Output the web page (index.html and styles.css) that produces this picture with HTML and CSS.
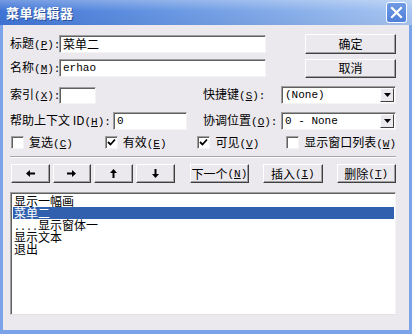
FILE: index.html
```html
<!DOCTYPE html>
<html>
<head>
<meta charset="utf-8">
<link rel="stylesheet" href="styles.css">
</head>
<body>
<div class="window">
  <div class="titlebar">
    <span class="title">菜单编辑器</span>
    <span class="close"><svg width="13" height="13" viewBox="0 0 13 13"><path d="M2 2 L11 11 M11 2 L2 11" stroke="#fff" stroke-width="2.2" stroke-linecap="square"/></svg></span>
  </div>
  <div class="body">
    <div class="row r1">
      <span class="lbl w49">标题<span class="mn">(<u>P</u>):</span></span>
      <span class="field wide">菜单二</span>
      <span class="spacer"></span>
      <span class="btn big">确定</span>
    </div>
    <div class="row r2">
      <span class="lbl w49">名称<span class="mn">(<u>M</u>):</span></span>
      <span class="field wide mono">erhao</span>
      <span class="spacer"></span>
      <span class="btn big">取消</span>
    </div>
    <div class="row r3">
      <span class="lbl w49">索引<span class="mn">(<u>X</u>):</span></span>
      <span class="field small"></span>
      <span class="lbl gap1">快捷键<span class="mn">(<u>S</u>):</span></span>
      <span class="combo"><span class="ctext mono">(None)</span><span class="cbtn"><svg width="7" height="4" viewBox="0 0 7 4"><path d="M0 0 H7 L3.5 4 Z" fill="#000"/></svg></span></span>
    </div>
    <div class="row r4">
      <span class="lbl w103">帮助上下文 ID<span class="mn">(<u>H</u>):</span></span>
      <span class="field mid mono">0</span>
      <span class="lbl gap2">协调位置<span class="mn">(<u>O</u>):</span></span>
      <span class="combo"><span class="ctext mono">0 - None</span><span class="cbtn"><svg width="7" height="4" viewBox="0 0 7 4"><path d="M0 0 H7 L3.5 4 Z" fill="#000"/></svg></span></span>
    </div>
    <div class="row r5">
      <span class="chk c1"><span class="box"></span><span class="ctxt">复选<span class="mn">(<u>C</u>)</span></span></span>
      <span class="chk c2"><span class="box"><svg width="9" height="9" viewBox="0 0 9 9"><path d="M1 4 L3.5 6.5 L8 1.5" stroke="#000" stroke-width="1.8" fill="none"/></svg></span><span class="ctxt">有效<span class="mn">(<u>E</u>)</span></span></span>
      <span class="chk c3"><span class="box"><svg width="9" height="9" viewBox="0 0 9 9"><path d="M1 4 L3.5 6.5 L8 1.5" stroke="#000" stroke-width="1.8" fill="none"/></svg></span><span class="ctxt">可见<span class="mn">(<u>V</u>)</span></span></span>
      <span class="chk c4"><span class="box"></span><span class="ctxt">显示窗口列表<span class="mn">(<u>W</u>)</span></span></span>
    </div>
    <div class="sep"></div>
    <div class="row r6">
      <span class="btn arrow"><svg width="9" height="7" viewBox="0 0 9 7"><path d="M0 3.5 L4 0 V2.5 H9 V4.5 H4 V7 Z" fill="#000"/></svg></span>
      <span class="btn arrow"><svg width="9" height="7" viewBox="0 0 9 7"><path d="M9 3.5 L5 0 V2.5 H0 V4.5 H5 V7 Z" fill="#000"/></svg></span>
      <span class="btn arrow"><svg width="7" height="9" viewBox="0 0 7 9"><path d="M3.5 0 L7 4 H4.5 V9 H2.5 V4 H0 Z" fill="#000"/></svg></span>
      <span class="btn arrow"><svg width="7" height="9" viewBox="0 0 7 9"><path d="M3.5 9 L7 5 H4.5 V0 H2.5 V5 H0 Z" fill="#000"/></svg></span>
      <span class="btn next">下一个<span class="mn">(<u>N</u>)</span></span>
      <span class="btn act ins">插入<span class="mn">(<u>I</u>)</span></span>
      <span class="btn act del">删除<span class="mn">(<u>T</u>)</span></span>
    </div>
    <div class="list">
      <div class="item">显示一幅画</div>
      <div class="item sel">菜单二</div>
      <div class="item"><span class="dots">....</span>显示窗体一</div>
      <div class="item">显示文本</div>
      <div class="item">退出</div>
    </div>
  </div>
</div>
</body>
</html>
```

FILE: styles.css
```css
* { box-sizing: border-box; }
html, body { margin: 0; padding: 0; }
body {
  width: 412px;
  height: 334px;
  overflow: hidden;
  background: #ece9ec;
  font-family: "Noto Sans CJK SC", "Noto Sans", sans-serif;
  font-size: 12px;
  color: #000;
}
.window {
  width: 412px;
  height: 334px;
  background: #ebe9ed;
  border-left: 3px solid #7ba3ea;
  border-right: 3px solid #7ba3ea;
  border-bottom: 4px solid #7ba3ea;
  display: flex;
  flex-direction: column;
}
.titlebar {
  height: 25px;
  margin: 0 -3px;
  background:
    linear-gradient(to bottom, rgba(255,255,255,0.28) 0%, rgba(255,255,255,0) 45%, rgba(0,0,0,0.04) 100%),
    linear-gradient(to right, #3f74d6 0%, #6c9ae4 45%, #a8c6f2 100%);
  display: flex;
  align-items: center;
  padding: 0 4px 0 6px;
  flex-shrink: 0;
}
.title {
  color: #fff;
  font-weight: bold;
  font-size: 13px;
  line-height: 14px;
  letter-spacing: 0.5px;
  text-shadow: 1px 1px 0 #2a4f9a;
  flex: 1;
}
.close {
  width: 21px;
  height: 21px;
  border: 1px solid #fff;
  border-radius: 3px;
  background: linear-gradient(to bottom, #6f9ae4, #4f7fd8);
  display: flex;
  align-items: center;
  justify-content: center;
  margin-right: 1px;
}
.body {
  padding: 9px 13px 0 7px;
  display: flex;
  flex-direction: column;
}
.row {
  display: flex;
  align-items: center;
  height: 20px;
}
.r2 { margin-top: 4px; }
.r3 { margin-top: 7px; }
.r4 { margin-top: 6px; }
.r5 { margin-top: 3px; height: 17px; }
.r6 { margin-top: 6px; height: 19px; }
.lbl { white-space: nowrap; line-height: 14px; }
.mn { font-family: "Liberation Mono", monospace; font-size: 11px; }
.w49 { width: 49px; }
.w103 { width: 103px; }
.gap1 { margin-left: 107px; width: 78px; }
.gap2 { margin-left: 16px; width: 78px; }
.spacer { flex: 1; }
.field {
  height: 18px;
  background: #fff;
  border-top: 1px solid #a0a0a0;
  border-left: 1px solid #a0a0a0;
  border-right: 1px solid #f4f4f4;
  border-bottom: 1px solid #f4f4f4;
  box-shadow: inset 1px 1px 0 #606060;
  padding: 0 3px;
  line-height: 16px;
  white-space: nowrap;
}
.wide { width: 207px; }
.small { width: 37px; height: 17px; }
.mid { width: 74px; }
.mono { font-family: "Liberation Mono", monospace; font-size: 11px; }
.btn {
  height: 19px;
  background: #ebe9ed;
  border-top: 1px solid #fff;
  border-left: 1px solid #fff;
  border-right: 1px solid #404040;
  border-bottom: 1px solid #404040;
  box-shadow: inset -1px -1px 0 #a0a0a0;
  display: flex;
  align-items: center;
  justify-content: center;
  white-space: nowrap;
  line-height: 14px;
}
.big { width: 91px; }
.r1 .btn { height: 20px; }
.combo {
  width: 115px;
  height: 18px;
  background: #fff;
  border-top: 1px solid #a0a0a0;
  border-left: 1px solid #a0a0a0;
  border-right: 1px solid #f4f4f4;
  border-bottom: 1px solid #f4f4f4;
  box-shadow: inset 1px 1px 0 #606060;
  display: flex;
  align-items: center;
  padding: 1px 1px 1px 3px;
}
.ctext { flex: 1; line-height: 14px; }
.cbtn {
  width: 14px;
  height: 14px;
  background: #ebe9ed;
  border-top: 1px solid #fff;
  border-left: 1px solid #fff;
  border-right: 1px solid #404040;
  border-bottom: 1px solid #404040;
  display: flex;
  align-items: center;
  justify-content: center;
}
.chk { display: flex; align-items: center; white-space: nowrap; }
.box {
  width: 13px;
  height: 13px;
  background: #fff;
  border-top: 1px solid #a0a0a0;
  border-left: 1px solid #a0a0a0;
  border-right: 1px solid #f4f4f4;
  border-bottom: 1px solid #f4f4f4;
  box-shadow: inset 1px 1px 0 #606060;
  display: flex;
  align-items: center;
  justify-content: center;
  margin-right: 5px;
}
.ctxt { line-height: 14px; }
.c1 { margin-left: 1px; width: 95px; }
.c2 { width: 94px; }
.c3 { width: 90px; }
.sep {
  margin-top: 5px;
  height: 2px;
  border-top: 1px solid #a6a6a6;
  border-bottom: 1px solid #fff;
}
.arrow { width: 39px; margin-left: 3px; }
.arrow:first-child { margin-left: 1px; }
.next { width: 60px; margin-left: 15px; }
.act { width: 60px; margin-left: 14px; }
.list {
  margin-top: 9px;
  height: 123px;
  background: #fff;
  border-top: 1px solid #a0a0a0;
  border-left: 1px solid #a0a0a0;
  border-right: 1px solid #f4f4f4;
  border-bottom: 1px solid #e0e0e0;
  box-shadow: inset 1px 1px 0 #606060;
  padding: 2px 1px 0 2px;
}
.item {
  height: 12px;
  line-height: 12px;
  padding-left: 1px;
  white-space: nowrap;
  font-size: 12px;
}
.sel { background: #3160ae; color: #fff; }
.dots { font-family: "Liberation Mono", monospace; font-size: 10px; }
```
